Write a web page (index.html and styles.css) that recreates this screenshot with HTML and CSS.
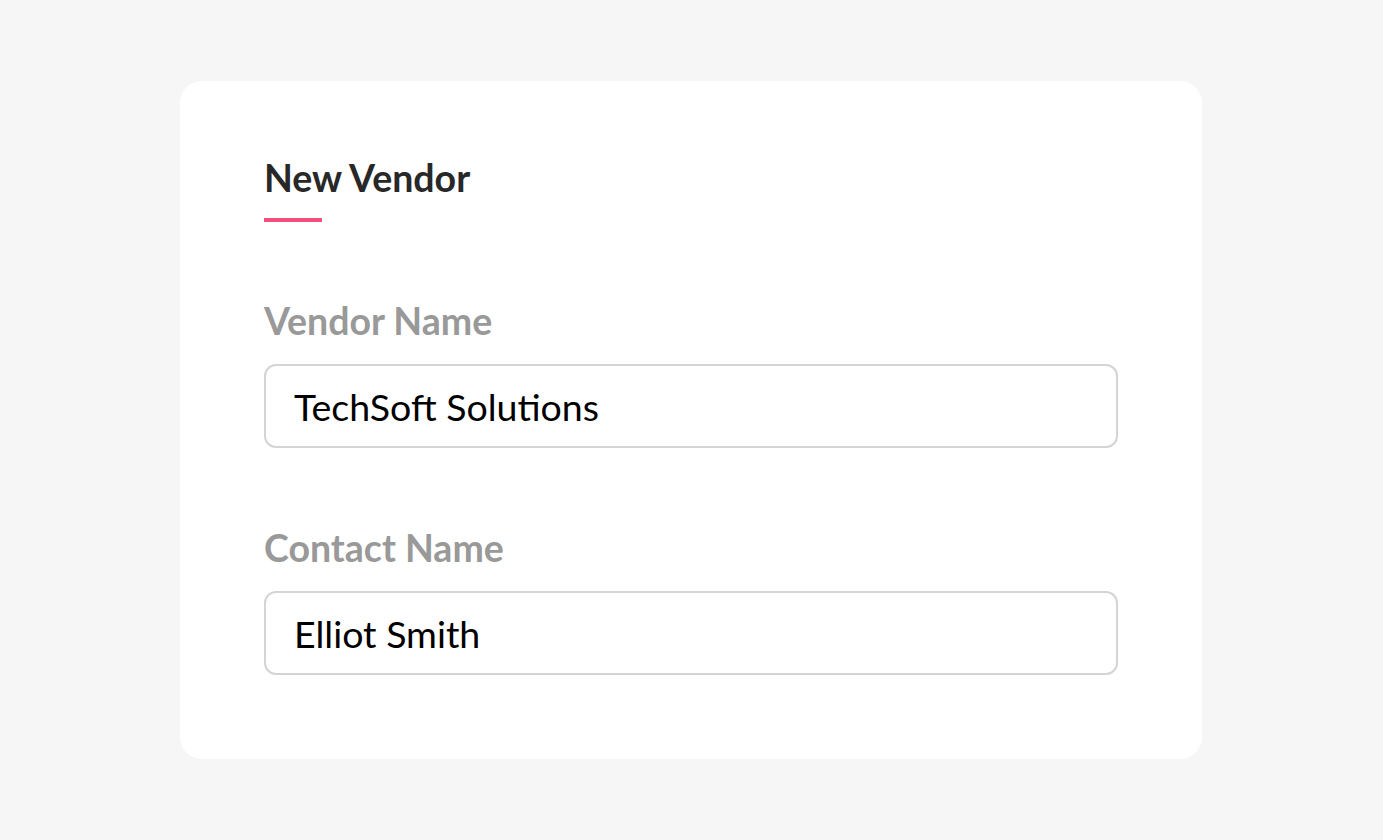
FILE: index.html
```html
<!DOCTYPE html>
<html lang="en">
<head>
<meta charset="UTF-8">
<meta name="viewport" content="width=device-width, initial-scale=1.0">
<title>New Vendor</title>
<link rel="stylesheet" href="styles.css">
</head>
<body>
<div class="card">
  <h2 class="title">New Vendor</h2>
  <div class="field">
    <label class="label" for="vendor">Vendor Name</label>
    <input class="input" id="vendor" type="text" value="TechSoft Solutions">
  </div>
  <div class="field">
    <label class="label" for="contact">Contact Name</label>
    <input class="input" id="contact" type="text" value="Elliot Smith">
  </div>
</div>
</body>
</html>
```

FILE: styles.css
```css
body {
  margin: 0;
  font-family: Lato, "Open Sans", sans-serif;
  background-color: #f6f6f6;
  padding: 81px 0 0 180px;
}
.card {
  width: 1022px;
  height: 678px;
  box-sizing: border-box;
  background: #fff;
  border-radius: 22px;
  padding: 73px 84px 0 84px;
}
.title {
  margin: 0 0 75px 0;
  font-size: 37.5px;
  line-height: 48px;
  font-weight: 700;
  color: #282828;
  position: relative;
  padding-bottom: 20px;
}
/* pink accent bar under the heading */
.title::after {
  content: "";
  position: absolute;
  left: 0;
  bottom: 0;
  width: 58px;
  height: 4px;
  background: #f24f7d;
}
.field {
  display: flex;
  flex-direction: column;
  margin-bottom: 76px;
}
.label {
  font-size: 37.5px;
  line-height: 48px;
  font-weight: 700;
  color: #999;
  margin-bottom: 19px;
}
.input {
  height: 84px;
  box-sizing: border-box;
  border: 2px solid #d4d4d4;
  border-radius: 12px;
  padding: 1px 28px 0 28px;
  font-family: inherit;
  font-size: 37.5px;
  color: #000;
  outline: none;
}
```
